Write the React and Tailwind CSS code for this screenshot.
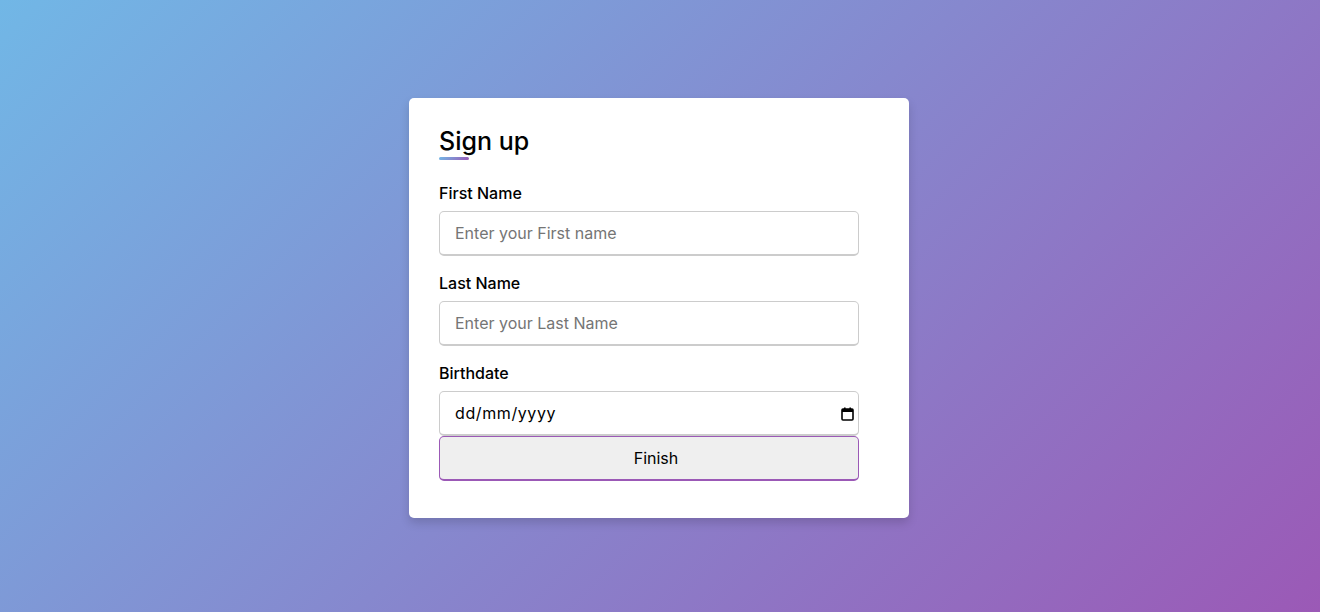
import React from 'react';

const font = { fontFamily: "Inter, 'Open Sans', sans-serif" };

function Field({ label, children }) {
  return (
    <div>
      <label className="block text-[16px] leading-[24px] font-medium text-black mb-[6px]">{label}</label>
      {children}
    </div>
  );
}

function CalendarIcon() {
  return (
    <svg width="13" height="14" viewBox="0 0 13 14" className="absolute right-[5px] top-1/2 -translate-y-1/2">
      <rect x="1" y="2" width="11" height="11" rx="1" fill="none" stroke="#000" strokeWidth="1.6" />
      <rect x="1" y="2" width="11" height="3" fill="#000" />
      <rect x="3" y="0.5" width="1.6" height="2" fill="#000" />
      <rect x="8.4" y="0.5" width="1.6" height="2" fill="#000" />
    </svg>
  );
}

export default function App() {
  const inputCls =
    'block w-[420px] h-[45px] pl-[15px] pr-[8px] text-[16px] text-black rounded-[5px] border border-b-2 border-[#cccccc] bg-white outline-none placeholder:text-[#757575] focus:border-[#9b59b6]';

  return (
    <div
      style={font}
      className="min-h-screen w-full flex justify-center items-center pt-[4px] pr-[2px] bg-[linear-gradient(135deg,#71b7e6,#9b59b6)]"
    >
      <div className="w-[500px] bg-white rounded-[5px] px-[30px] pt-[25px] pb-[37px] shadow-[0_5px_10px_rgba(0,0,0,0.15)]">
        <div className="relative h-[37px] text-[25px] leading-[37px] font-medium text-black">
          Sign up
          <span className="absolute left-0 bottom-0 h-[3px] w-[30px] rounded-[5px] bg-[linear-gradient(135deg,#71b7e6,#9b59b6)]" />
        </div>

        <form className="mt-[21px]" onSubmit={e => e.preventDefault()}>
          <div className="flex flex-col gap-[15px]">
            <Field label="First Name">
              <input type="text" placeholder="Enter your First name" className={inputCls} />
            </Field>
            <Field label="Last Name">
              <input type="text" placeholder="Enter your Last Name" className={inputCls} />
            </Field>
            <Field label="Birthdate">
              <div className="relative w-[420px]">
                <input type="text" readOnly defaultValue="dd/mm/yyyy" className={inputCls + ' tracking-[0.6px]'} />
                <CalendarIcon />
              </div>
            </Field>
          </div>
          <button
            type="submit"
            className="block w-[420px] h-[45px] pl-[14px] text-[16px] text-black bg-[#efefef] rounded-[5px] border border-b-2 border-[#9b59b6]"
          >
            Finish
          </button>
        </form>
      </div>
    </div>
  );
}
